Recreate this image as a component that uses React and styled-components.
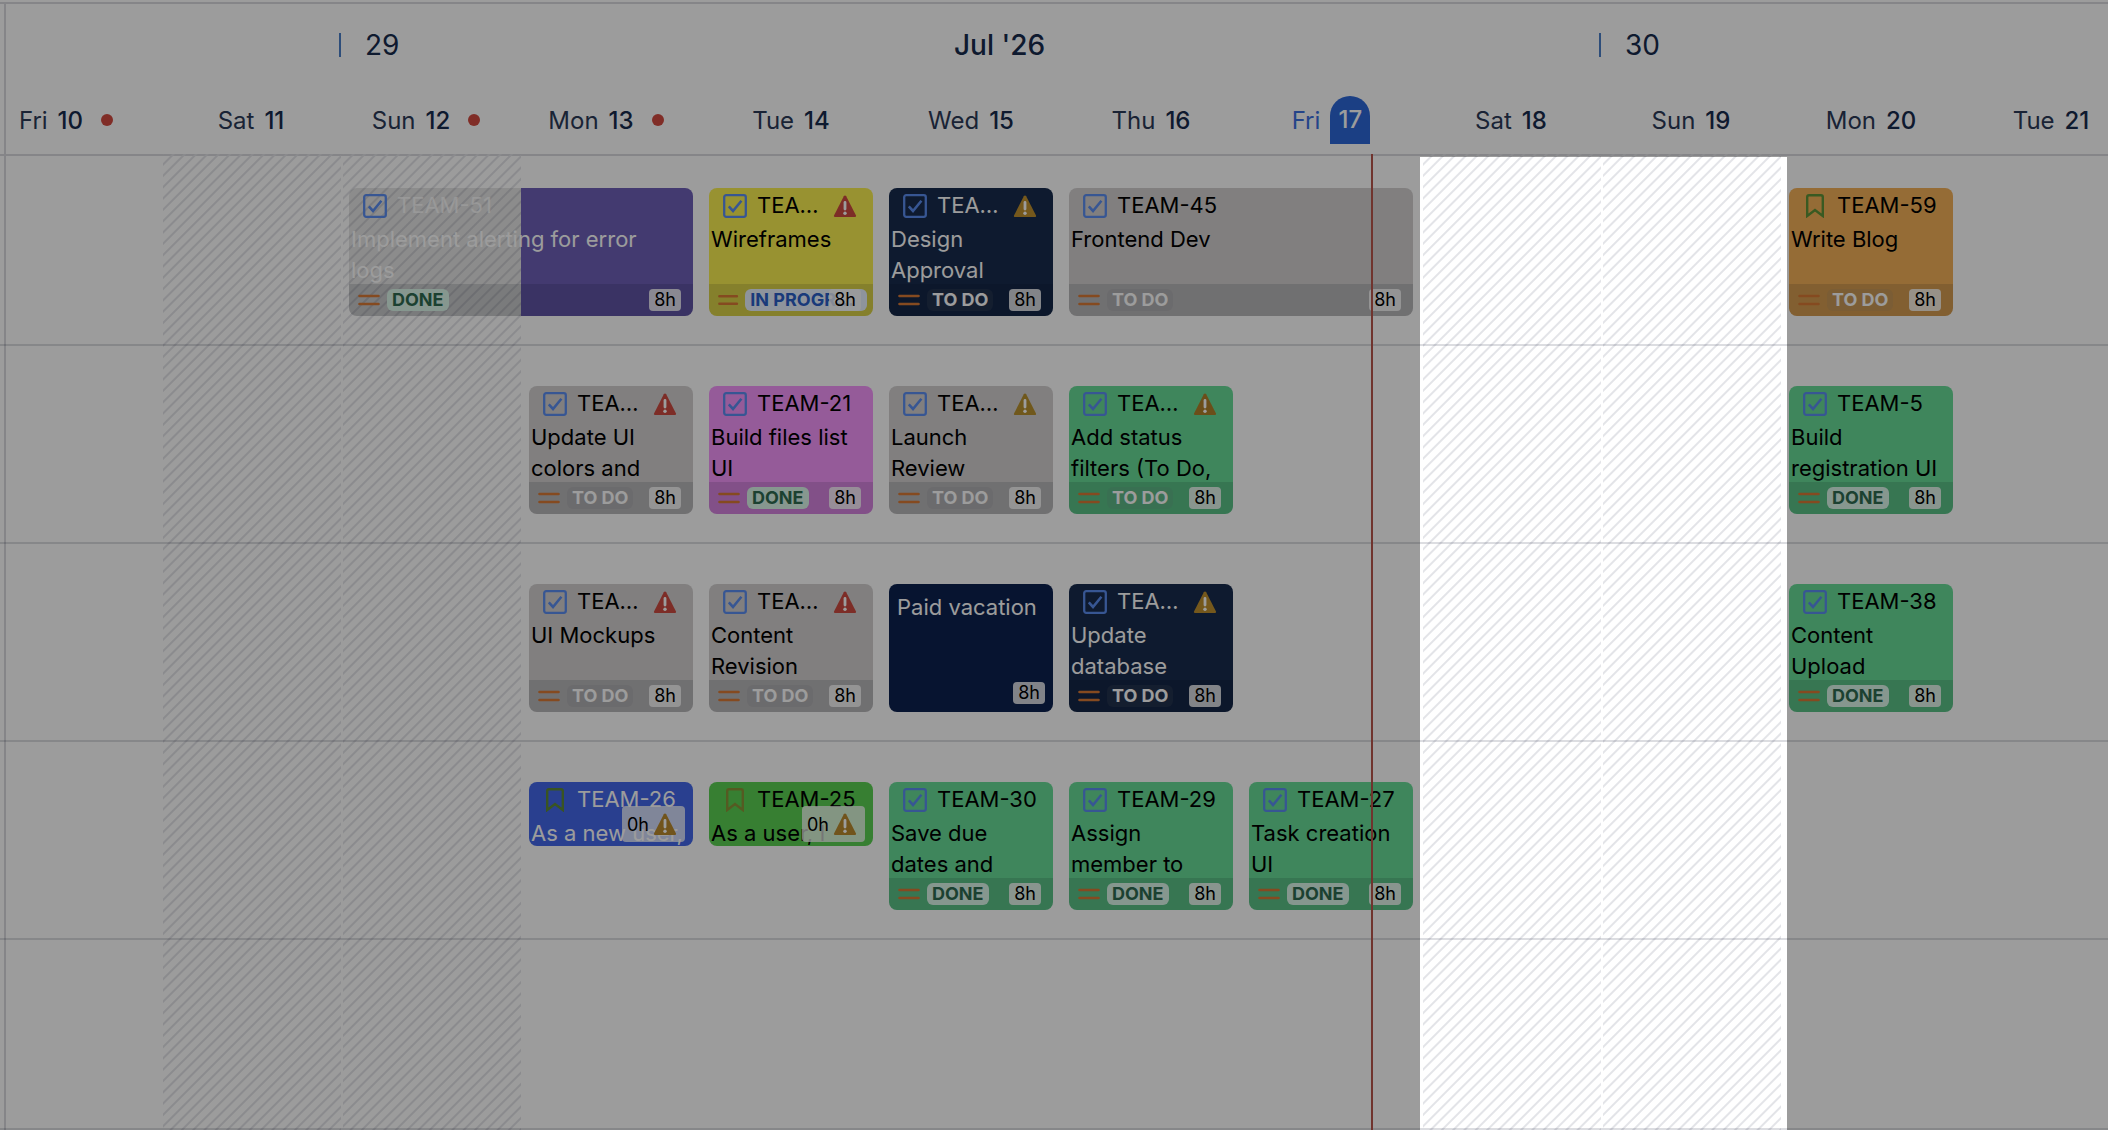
import React from "react";
import styled, { createGlobalStyle } from "styled-components";

const days = [
  { name: "Fri", num: 10, dot: true },
  { name: "Sat", num: 11, weekend: true },
  { name: "Sun", num: 12, weekend: true, dot: true },
  { name: "Mon", num: 13, dot: true },
  { name: "Tue", num: 14 },
  { name: "Wed", num: 15 },
  { name: "Thu", num: 16 },
  { name: "Fri", num: 17, today: true },
  { name: "Sat", num: 18, weekend: true },
  { name: "Sun", num: 19, weekend: true },
  { name: "Mon", num: 20 },
  { name: "Tue", num: 21 },
];

const rows = [
  [
    { id: "TEAM-51", title: "Implement alerting for error logs", col: 3, span: 2, bg: "#6e5fb8", light: true, status: "DONE", off: true },
    { id: "TEAM-12", title: "Wireframes", col: 5, bg: "#f9ef50", status: "IN PROGRESS", warn: "#cc4b40" },
    { id: "TEAM-14", title: "Design Approval", col: 6, bg: "#172b4d", light: true, status: "TO DO", warn: "#bf902f" },
    { id: "TEAM-45", title: "Frontend Dev", col: 7, span: 2, bg: "#d3d0d0", status: "TO DO" },
    { id: "TEAM-59", title: "Write Blog", col: 11, bg: "#f3b159", status: "TO DO", story: "#5e9438" },
  ],
  [
    { id: "TEAM-18", title: "Update UI colors and", col: 4, bg: "#d3d0d0", status: "TO DO", warn: "#cc4b40" },
    { id: "TEAM-21", title: "Build files list UI", col: 5, bg: "#f395fb", status: "DONE" },
    { id: "TEAM-16", title: "Launch Review", col: 6, bg: "#d3d0d0", status: "TO DO", warn: "#b8912f" },
    { id: "TEAM-33", title: "Add status filters (To Do,", col: 7, bg: "#67dc97", status: "TO DO", warn: "#b08029" },
    { id: "TEAM-5", title: "Build registration UI", col: 11, bg: "#67dc97", status: "DONE" },
  ],
  [
    { id: "TEAM-13", title: "UI Mockups", col: 4, bg: "#d3d0d0", status: "TO DO", warn: "#cc4b40" },
    { id: "TEAM-17", title: "Content Revision", col: 5, bg: "#d3d0d0", status: "TO DO", warn: "#cc4b40" },
    { title: "Paid vacation", col: 6, bg: "#0c214f", light: true, leave: true },
    { id: "TEAM-36", title: "Update database", col: 7, bg: "#172b4d", light: true, status: "TO DO", warn: "#bf902f" },
    { id: "TEAM-38", title: "Content Upload", col: 11, bg: "#67dc97", status: "DONE" },
  ],
  [
    { id: "TEAM-26", title: "As a new user,", col: 4, bg: "#4368ea", light: true, short: true, story: "#5e8a38" },
    { id: "TEAM-25", title: "As a user, I", col: 5, bg: "#5ad052", short: true, story: "#8c9438" },
    { id: "TEAM-30", title: "Save due dates and", col: 6, bg: "#67dc97", status: "DONE" },
    { id: "TEAM-29", title: "Assign member to", col: 7, bg: "#67dc97", status: "DONE" },
    { id: "TEAM-27", title: "Task creation UI", col: 8, bg: "#67dc97", status: "DONE" },
  ],
  [],
];

const statusColors = {
  DONE: { bg: "#dcf7ea", color: "#2f6b50" },
  "IN PROGRESS": { bg: "#e9f2ff", color: "#2a5fc8" },
  "TO DO": { bg: "rgba(120, 125, 135, 0.12)", color: "#fff" },
};

const TaskIcon = () => (
  <svg width="24" height="24" viewBox="0 0 24 24" fill="none" stroke="#5b8df0" strokeWidth="2.3">
    <rect x="1.2" y="1.2" width="21.6" height="21.6" rx="2" />
    <path d="M5.800 12.400l4.200 4.600 8.400-10.300" strokeWidth="2.6" />
  </svg>
);

const StoryIcon = ({ color }) => (
  <svg width="24" height="24" viewBox="0 0 24 24" fill="none" stroke={color} strokeWidth="2.4">
    <path d="M4.200 22V3a1.800 1.800 0 0 1 1.800-1.800h12a1.800 1.800 0 0 1 1.800 1.800v19L12 16z" />
  </svg>
);

const WarningIcon = ({ color }) => (
  <svg width="24" height="24" viewBox="0 0 24 24">
    <path d="M12 1.500c.5 0 .9.300 1.200.800l9.800 19.200c.3.700-.1 1.500-.9 1.500H1.900c-.8 0-1.200-.8-.9-1.500L10.800 2.300c.3-.5.700-.8 1.200-.8z" fill={color} />
    <path d="M12 8.500v6.500" stroke="#fff" strokeWidth="2.800" strokeLinecap="round" />
    <circle cx="12" cy="19.200" r="1.700" fill="#fff" />
  </svg>
);

const PriorityIcon = () => (
  <svg width="24" height="16" viewBox="0 0 24 16" stroke="#d97a35" strokeWidth="2.600" strokeLinecap="round">
    <path d="M2.500 4h19M2.500 12h19" />
  </svg>
);

const Card = ({ item }) => {
  if (item.leave) {
    return (
      <CardBox $col={item.col} $bg={item.bg} $light>
        <LeaveTitle>{item.title}</LeaveTitle>
        <LeaveFoot>
          <Hours>8h</Hours>
        </LeaveFoot>
      </CardBox>
    );
  }
  const status = statusColors[item.status];
  return (
    <CardBox $col={item.col} $span={item.span} $bg={item.bg} $light={item.light} $short={item.short} $off={item.off}>
      <CardHead>
        {item.story ? <StoryIcon color={item.story} /> : <TaskIcon />}
        <Key $off={item.off}>{item.id}</Key>
        {item.warn && (
          <Warn>
            <WarningIcon color={item.warn} />
          </Warn>
        )}
      </CardHead>
      <Title>{item.title}</Title>
      {item.short ? (
        <Badge>
          0h
          <WarningIcon color="#b98a2e" />
        </Badge>
      ) : (
        <CardFoot>
          <PriorityIcon />
          <Status $bg={status.bg} $color={status.color}>
            <span>{item.status}</span>
          </Status>
          <FootHours>8h</FootHours>
        </CardFoot>
      )}
    </CardBox>
  );
};

const App = () => {
  return (
    <Page>
      <GlobalStyle />
      <Header>
        <Weeks>
          <Week $col={3}>29</Week>
          <Month>Jul '26</Month>
          <Week $col={10}>30</Week>
        </Weeks>
        <Days>
          {days.map((d) => (
            <Day key={d.num} $today={d.today}>
              <span>{d.name}</span>
              <b>{d.num}</b>
              {d.dot && <Dot />}
            </Day>
          ))}
        </Days>
      </Header>
      <Board>
        <Columns>
          {days.map((d) => (
            <Column key={d.num} $weekend={d.weekend} />
          ))}
        </Columns>
        {rows.map((items, i) => (
          <Row key={i}>
            {items.map((item) => (
              <Card key={item.title} item={item} />
            ))}
          </Row>
        ))}
        <NowLine />
        <Spotlight />
      </Board>
    </Page>
  );
};

const GlobalStyle = createGlobalStyle`
  * {
    box-sizing: border-box;
  }
  body {
    margin: 0;
    background: #fff;
    color: #172b4d;
    font-family: Inter, "Liberation Sans", sans-serif;
    font-size: 22px;
  }
`;

const Page = styled.div`
  position: relative;
  min-height: 100vh;
  overflow: hidden;
  display: flex;
  flex-direction: column;
  &::before {
    content: "";
    position: absolute;
    top: 2px;
    bottom: 0;
    left: 4px;
    width: 2px;
    background: #d9dade;
  }
`;

const Header = styled.header`
  margin-top: 2px;
  border-top: 2px solid #d9dade;
  border-bottom: 2px solid #d9dade;
`;

const Weeks = styled.div`
  display: grid;
  grid-template-columns: repeat(12, 180px);
  align-items: center;
  height: 84px;
  margin-left: -19px;
  padding-bottom: 2px;
`;

const Week = styled.div`
  grid-column: ${(p) => p.$col};
  grid-row: 1;
  height: 24px;
  margin-left: -2px;
  padding-left: 24px;
  border-left: 2px solid #4a7fc8;
  font-size: 28px;
  line-height: 24px;
`;

const Month = styled.div`
  grid-column: 6 / 8;
  grid-row: 1;
  padding-left: 73px;
  font-size: 28px;
  font-weight: 500;
  line-height: 32px;
`;

const Days = styled.div`
  display: grid;
  grid-template-columns: repeat(12, 180px);
  height: 66px;
  margin-left: -19px;
`;

const Day = styled.div`
  display: flex;
  align-items: center;
  justify-content: center;
  gap: 10px;
  height: 64px;
  font-size: 24px;
  color: ${(p) => (p.$today ? "#3b70e0" : "#2c3a58")};
  & b {
    font-weight: 500;
    color: ${(p) => (p.$today ? "#fff" : "#172b4d")};
    ${(p) =>
      p.$today &&
      `
      width: 40px;
      height: 48px;
      line-height: 48px;
      text-align: center;
      border-radius: 20px 20px 0 0;
      background: #2d68d8;
    `}
  }
`;

const Dot = styled.i`
  width: 12px;
  height: 12px;
  margin: 0 10px 0 8px;
  border-radius: 50%;
  background: #d24b40;
`;

const Board = styled.main`
  position: relative;
  flex: 1;
  display: flex;
  flex-direction: column;
`;

const Columns = styled.div`
  position: absolute;
  inset: -2px 0 0 -19px;
  display: grid;
  grid-template-columns: repeat(12, 180px);
`;

const Column = styled.div`
  margin-left: 2px;
  ${(p) =>
    p.$weekend &&
    `background: repeating-linear-gradient(-45deg, #e3e4e8 0 1px, transparent 2px 7px, #e3e4e8 8px);`}
`;

const Row = styled.section`
  position: relative;
  display: grid;
  grid-template-columns: repeat(12, 180px);
  align-items: start;
  height: 198px;
  margin-left: -19px;
  padding-top: 40px;
  border-bottom: 2px solid rgba(9, 16, 40, 0.14);
  &:nth-child(2) {
    height: 190px;
    padding-top: 32px;
  }
  &:nth-child(6) {
    flex: 1;
  }
`;

const CardBox = styled.article`
  position: relative;
  grid-column: ${(p) => p.$col} / span ${(p) => p.$span || 1};
  grid-row: 1;
  display: flex;
  flex-direction: column;
  height: ${(p) => (p.$short ? 64 : 128)}px;
  margin: 0 8px;
  border-radius: 8px;
  overflow: hidden;
  color: ${(p) => (p.$light ? "#fff" : "#000")};
  background: ${(p) =>
    p.$off ? `linear-gradient(90deg, rgba(0, 0, 0, 0.1) 50%, ${p.$bg} 50%)` : p.$bg};
`;

const CardHead = styled.div`
  display: flex;
  align-items: center;
  flex: none;
  height: 36px;
  padding: 0 12px 0 14px;
  & svg {
    flex: none;
  }
`;

const Key = styled.span`
  flex: 1;
  min-width: 0;
  margin-left: 10px;
  padding-bottom: 2px;
  overflow: hidden;
  text-overflow: ellipsis;
  white-space: nowrap;
  line-height: 26px;
  opacity: ${(p) => (p.$off ? 0.8 : 1)};
`;

const Warn = styled.span`
  display: flex;
  margin: 0 4px 0 8px;
`;

const Title = styled.p`
  flex: 1;
  min-height: 0;
  margin: 0;
  padding: 0 8px 0 2px;
  line-height: 31px;
`;

const CardFoot = styled.div`
  position: relative;
  display: flex;
  align-items: center;
  gap: 6px;
  flex: none;
  height: 32px;
  padding: 0 6px 0 8px;
  background: rgba(9, 16, 30, 0.13);
  & svg {
    min-width: 20px;
  }
`;

const Status = styled.span`
  display: flex;
  min-width: 0;
  padding: 0 5px;
  border-radius: 6px;
  background: ${(p) => p.$bg};
  color: ${(p) => p.$color};
  font-size: 18px;
  font-weight: 700;
  line-height: 22px;
  & span {
    overflow: hidden;
    text-overflow: ellipsis;
    white-space: nowrap;
  }
`;

const Hours = styled.span`
  margin-left: auto;
  padding: 0 5px;
  border-radius: 4px;
  background: rgba(255, 255, 255, 0.82);
  color: #000;
  font-size: 18px;
  line-height: 22px;
`;

const FootHours = styled(Hours)`
  position: absolute;
  right: 12px;
`;

const LeaveTitle = styled.p`
  flex: 1;
  margin: 0;
  padding: 8px 8px 0;
  line-height: 31px;
`;

const LeaveFoot = styled.div`
  display: flex;
  padding: 0 8px 8px;
`;

const Badge = styled.div`
  position: absolute;
  right: 8px;
  bottom: 4px;
  display: flex;
  align-items: center;
  gap: 4px;
  height: 36px;
  padding: 0 8px 0 5px;
  border-radius: 4px;
  background: rgba(255, 255, 255, 0.76);
  color: #000;
  font-size: 18px;
`;

const NowLine = styled.div`
  position: absolute;
  top: -2px;
  bottom: 0;
  left: 1371px;
  width: 2px;
  background: #b8554c;
`;

const Spotlight = styled.div`
  position: absolute;
  top: 1px;
  bottom: 0;
  left: 1420px;
  width: 367px;
  box-shadow: 0 0 0 3000px rgba(0, 0, 0, 0.39);
`;

export default App;
